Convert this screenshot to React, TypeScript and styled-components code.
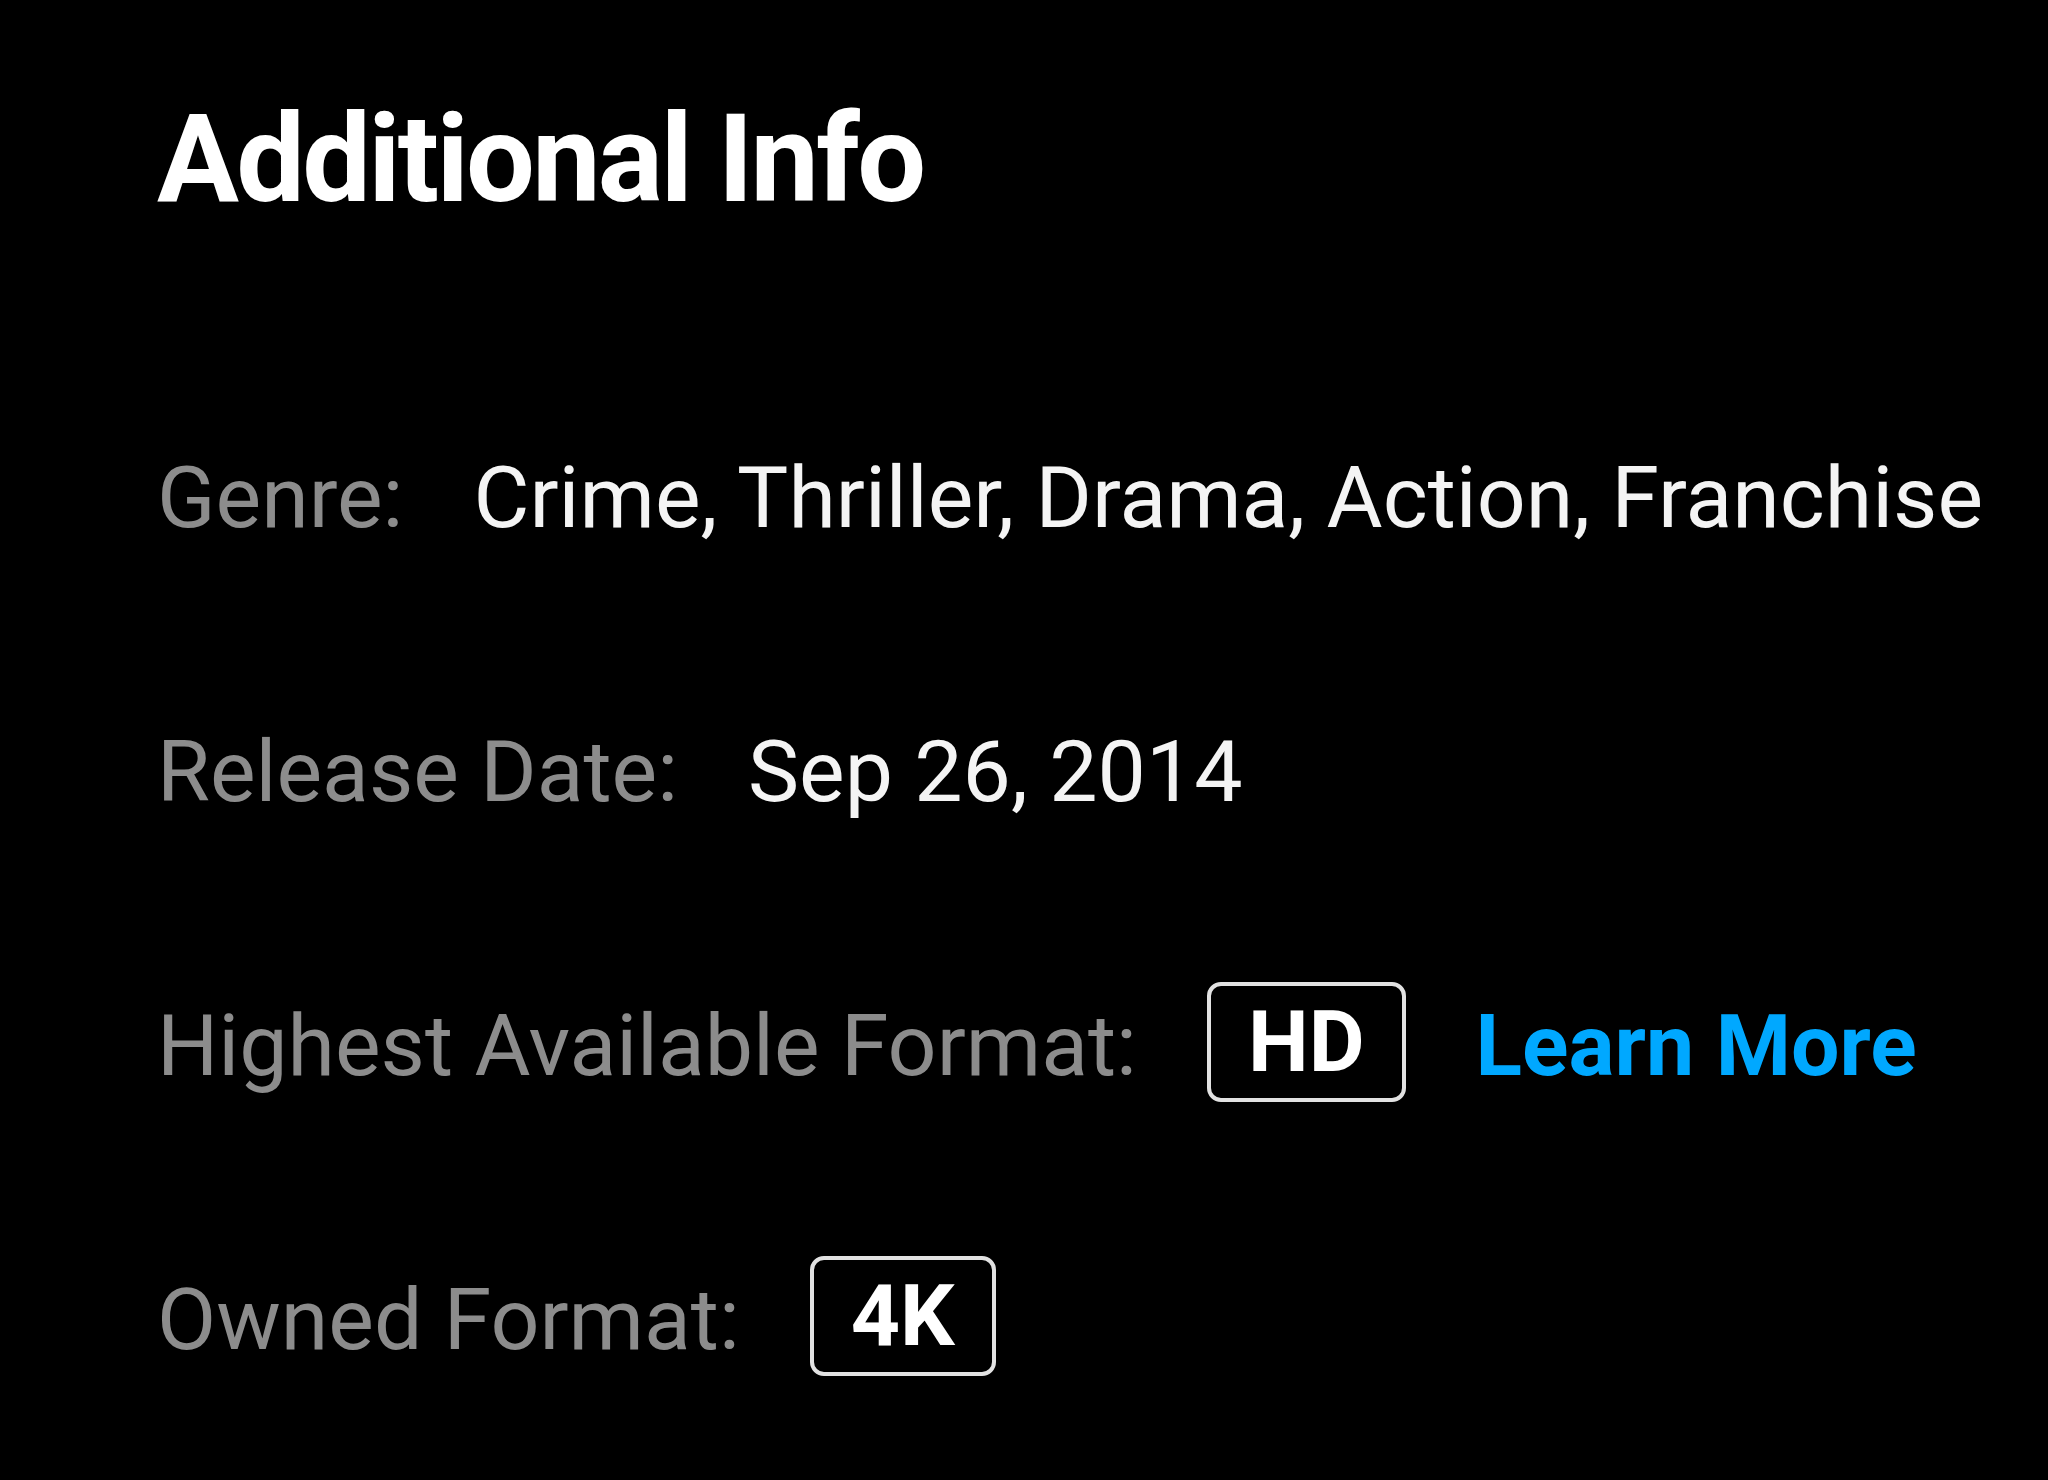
import React from 'react';
import styled, { createGlobalStyle } from 'styled-components';

const GlobalStyle = createGlobalStyle`
  html, body {
    margin: 0;
    padding: 0;
    background: #000;
  }
  body {
    font-family: Roboto, "Liberation Sans", sans-serif;
    -webkit-font-smoothing: antialiased;
  }
`;

type InfoRow = {
  label: string;
  value?: string;
  badge?: string;
  link?: string;
};

const rows: InfoRow[] = [
  { label: 'Genre:', value: 'Crime, Thriller, Drama, Action, Franchise' },
  { label: 'Release Date:', value: 'Sep 26, 2014' },
  { label: 'Highest Available Format:', badge: 'HD', link: 'Learn More' },
  { label: 'Owned Format:', badge: '4K' },
];

const App: React.FC = () => {
  return (
    <>
      <GlobalStyle />
      <Page>
        <Title>Additional Info</Title>
        <List>
          {rows.map((row) => (
            <Row key={row.label}>
              <Label>{row.label}</Label>
              {row.value && <Value>{row.value}</Value>}
              {row.badge && <Badge>{row.badge}</Badge>}
              {row.link && <Link href="#">{row.link}</Link>}
            </Row>
          ))}
        </List>
      </Page>
    </>
  );
};

export default App;

const Page = styled.div`
  display: flex;
  flex-direction: column;
  min-height: 1480px;
  box-sizing: border-box;
  padding: 89px 0 0 157px;
  background: #000;
`;

const Title = styled.h1`
  margin: 0;
  font-size: 122px;
  font-weight: 700;
  line-height: 1.172;
  color: #fff;
  letter-spacing: -2.7px;
`;

const List = styled.div`
  display: flex;
  flex-direction: column;
  gap: 154px;
  margin-top: 206px;
`;

const Row = styled.div`
  display: flex;
  align-items: center;
  gap: 70px;
  min-height: 120px;
  font-size: 86px;
  line-height: 1.172;
`;

const Label = styled.span`
  color: #8c8c8c;
  white-space: nowrap;
`;

const Value = styled.span`
  color: #f4f4f4;
  white-space: nowrap;
`;

const Badge = styled.span`
  display: inline-flex;
  align-items: center;
  justify-content: center;
  box-sizing: border-box;
  height: 120px;
  margin: -4px 0 4px;
  padding: 0 37px;
  border: 4px solid #e2e2e2;
  border-radius: 14px;
  color: #fff;
  font-weight: 700;
`;

const Link = styled.a`
  color: #00a8ff;
  font-weight: 700;
  text-decoration: none;
  white-space: nowrap;
`;
